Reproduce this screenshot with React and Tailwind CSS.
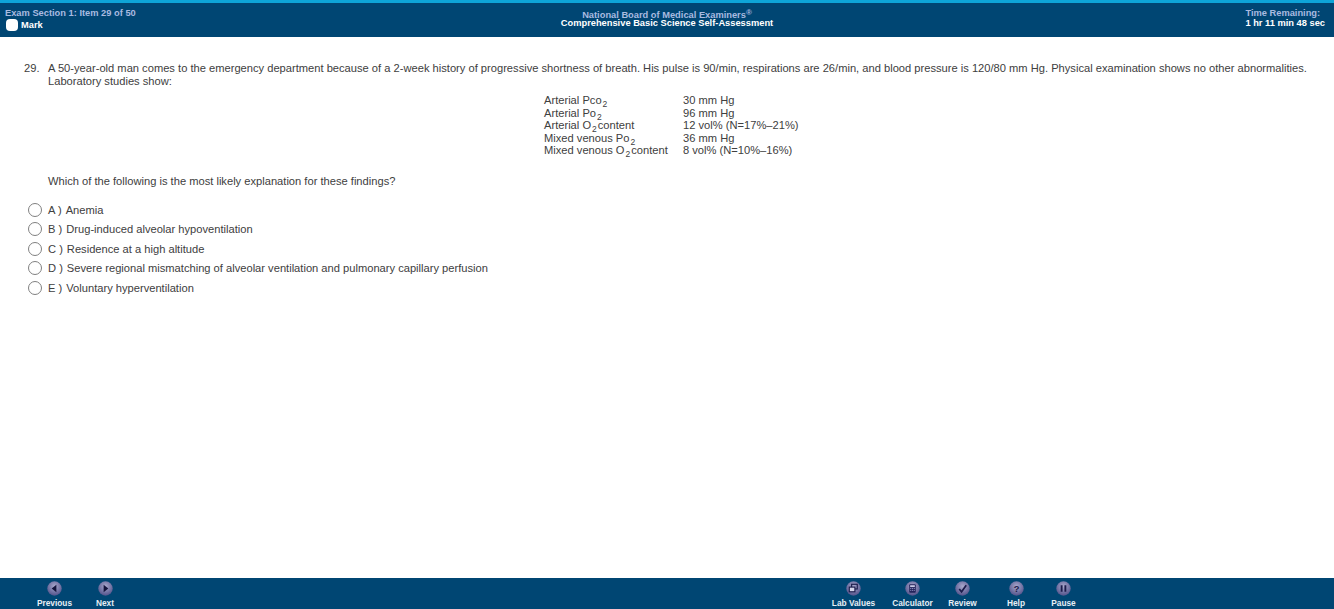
const labs = [
  { name: <>Arterial Pco<Sub /></>, value: '30 mm Hg' },
  { name: <>Arterial Po<Sub /></>, value: '96 mm Hg' },
  { name: <>Arterial O<Sub /><span className="ml-[1px]">content</span></>, value: '12 vol% (N=17%–21%)' },
  { name: <>Mixed venous Po<Sub /></>, value: '36 mm Hg' },
  { name: <>Mixed venous O<Sub /><span className="ml-[1px]">content</span></>, value: '8 vol% (N=10%–16%)' },
]

const answers = [
  ['A', 'Anemia'],
  ['B', 'Drug-induced alveolar hypoventilation'],
  ['C', 'Residence at a high altitude'],
  ['D', 'Severe regional mismatching of alveolar ventilation and pulmonary capillary perfusion'],
  ['E', 'Voluntary hyperventilation'],
]

function Sub() {
  return <span className="inline-block align-[-3px] ml-[1px] text-[8.5px] leading-[5px]">2</span>
}

function ToolIcon({ children }) {
  return (
    <svg width="17" height="17" viewBox="0 0 16 16" className="block">
      <defs>
        <radialGradient id="ball" cx="50%" cy="35%" r="70%">
          <stop offset="0%" stopColor="#a8a8cc" />
          <stop offset="100%" stopColor="#4c4c86" />
        </radialGradient>
      </defs>
      <circle cx="8" cy="8" r="7.7" fill="url(#ball)" />
      {children}
    </svg>
  )
}

function ToolButton({ label, className, children }) {
  return (
    <div className={`flex flex-col items-center ${className}`}>
      <ToolIcon>{children}</ToolIcon>
      <span className="mt-[1px] text-[8.3px] leading-[12px] font-bold text-[#e6eef5] whitespace-nowrap">{label}</span>
    </div>
  )
}

export default function App() {
  return (
    <div className="flex flex-col h-[609px] bg-white font-['Liberation_Sans',Arial,sans-serif] overflow-hidden">
      {/* 상단 바 */}
      <header className="h-[37px] shrink-0 border-t-[3px] border-[#0ea5d8] bg-[#004673] grid grid-cols-[1fr_auto_1fr] px-[5px] text-[9.3px] font-bold leading-[10px]">
        <div className="pt-[5px]">
          <div className="text-[#a9bbe0]">Exam Section 1: Item 29 of 50</div>
          <div className="flex items-center gap-[3px] mt-[1px] text-white">
            <span className="ml-[1px] w-[12px] h-[12px] rounded-[4px] bg-white"></span>
            Mark
          </div>
        </div>
        <div className="pt-[7px] text-center">
          <div className="text-[#a9bbe0]">National Board of Medical Examiners<span className="inline-block align-[3px] text-[8px] leading-[5px]">®</span></div>
          <div className="text-white -mt-[2px]">Comprehensive Basic Science Self-Assessment</div>
        </div>
        <div className="pt-[5px] pr-[4px] justify-self-end">
          <div className="text-[#a9bbe0]">Time Remaining:</div>
          <div className="text-white">1 hr 11 min 48 sec</div>
        </div>
      </header>

      {/* 문제 본문 */}
      <main className="flex-1 pt-[25px] text-[11.15px] leading-[12.5px] text-[#404040]">
        <div className="flex pl-[24px] pr-[20px]">
          <span className="w-[24px] shrink-0">29.</span>
          <p>
            A 50-year-old man comes to the emergency department because of a 2-week history of progressive shortness of breath. His pulse is 90/min, respirations are 26/min, and blood pressure is 120/80 mm Hg. Physical examination shows no other abnormalities. Laboratory studies show:
          </p>
        </div>

        <div className="mt-[7px] ml-[544px] grid grid-cols-[139px_1fr]">
          {labs.map((row) => (
            <div key={row.value} className="contents">
              <div className="h-[12.5px] whitespace-nowrap">{row.name}</div>
              <div className="h-[12.5px]">{row.value}</div>
            </div>
          ))}
        </div>

        <p className="mt-[18px] ml-[48px]">Which of the following is the most likely explanation for these findings?</p>

        <div className="mt-[13px] ml-[28px] flex flex-col">
          {answers.map(([letter, text]) => (
            <div key={letter} className="h-[19.5px] flex items-center">
              <span className="w-[14px] h-[14px] rounded-full border border-[#808080] bg-white shrink-0"></span>
              <span className="ml-[6px]">{letter} )</span>
              <span className="ml-[4px]">{text}</span>
            </div>
          ))}
        </div>
      </main>

      {/* 하단 바 */}
      <footer className="h-[31px] shrink-0 bg-[#004673] flex pt-[3px]">
        <ToolButton label="Previous" className="ml-[37px] w-[35px]">
          <path d="M10 4v8L5 8z" fill="#14143c" />
        </ToolButton>
        <ToolButton label="Next" className="ml-[24px] w-[18px]">
          <path d="M6 4v8l5-4z" fill="#14143c" />
        </ToolButton>
        <ToolButton label="Lab Values" className="ml-[718px] w-[43px]">
          <rect x="6" y="3.5" width="6" height="5" fill="none" stroke="#1b1b4a" strokeWidth="1.2" />
          <rect x="3.5" y="6.5" width="6" height="5" fill="#d5d5ea" stroke="#1b1b4a" strokeWidth="1.2" />
        </ToolButton>
        <ToolButton label="Calculator" className="ml-[17px] w-[41px]">
          <rect x="4.5" y="3.5" width="7" height="9" rx="1" fill="#23235a" />
          <rect x="5.5" y="4.5" width="5" height="2" fill="#c9c9e6" />
          <path d="M5.5 8h5M5.5 10h5" stroke="#8d8dbe" strokeWidth="1" strokeDasharray="1.2 .7" />
        </ToolButton>
        <ToolButton label="Review" className="ml-[15px] w-[29px]">
          <path d="M4.5 8.5l2.5 3 5-7" fill="none" stroke="#1b1b4a" strokeWidth="1.8" />
        </ToolButton>
        <ToolButton label="Help" className="ml-[30px] w-[18px]">
          <text x="8" y="11.5" textAnchor="middle" fontSize="10" fontWeight="bold" fill="#1b1b4a">?</text>
        </ToolButton>
        <ToolButton label="Pause" className="ml-[26px] w-[25px]">
          <path d="M6 4.5v7M10 4.5v7" stroke="#1b1b4a" strokeWidth="2" />
        </ToolButton>
      </footer>
    </div>
  )
}
